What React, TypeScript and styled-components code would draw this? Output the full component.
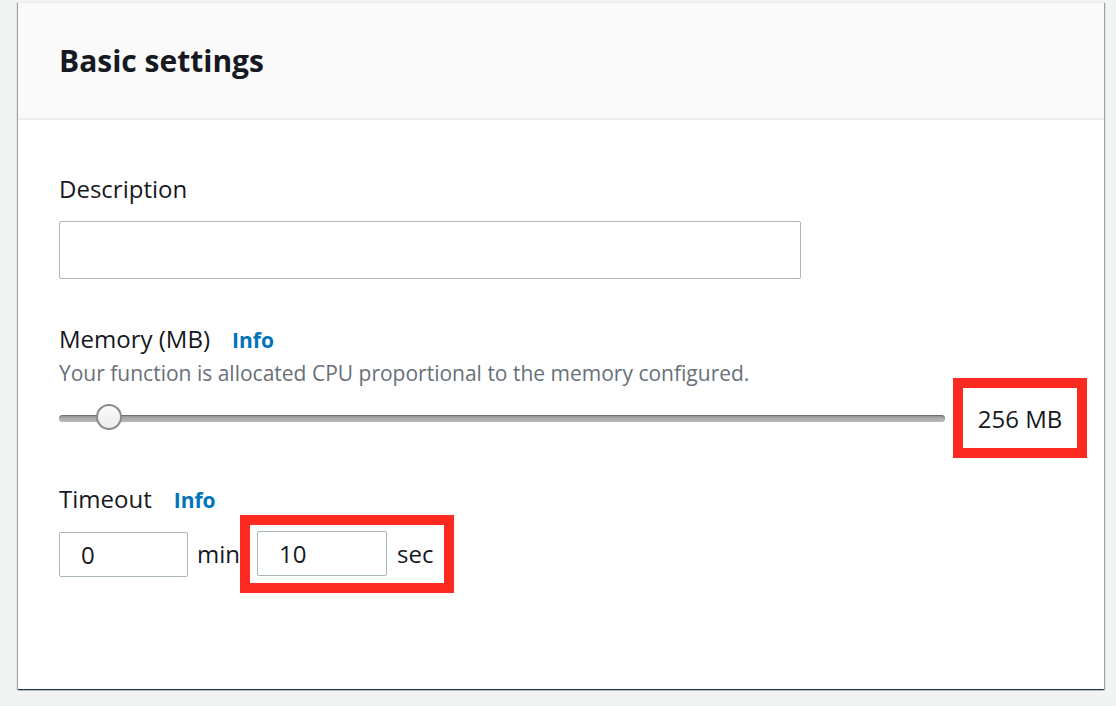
import React from "react";
import styled, { createGlobalStyle } from "styled-components";

const GlobalStyle = createGlobalStyle`
  html, body {
    margin: 0;
    padding: 0;
    background: #f2f3f3;
    font-family: "Open Sans", "Noto Sans", Arial, sans-serif;
    color: #16191f;
  }
  * { box-sizing: border-box; }
`;

const Page = styled.div`
  width: 1116px;
  height: 706px;
  padding: 2px 12px 0 18px;
  overflow: hidden;
`;

const Card = styled.section`
  width: 1086px;
  background: #ffffff;
  box-shadow: 0 1px 1px 0 rgba(0, 28, 36, 0.6),
    0 2px 1px -1px rgba(0, 28, 36, 0.35),
    1px 1px 1px 0 rgba(0, 28, 36, 0.3),
    -1px 1px 1px 0 rgba(0, 28, 36, 0.3);
  border-top: 1px solid #eaeded;
`;

const Header = styled.header`
  background: #fafafa;
  border-bottom: 2px solid #eaeded;
  padding: 40px 41px 39px;
`;

const Title = styled.h2`
  margin: 0;
  font-size: 30px;
  line-height: 36px;
  font-weight: 700;
  letter-spacing: 0;
  color: #16191f;
`;

const Body = styled.div`
  padding: 53px 17px 96px 41px;
  display: flex;
  flex-direction: column;
`;

const Field = styled.div<{ $top?: number }>`
  display: flex;
  flex-direction: column;
  margin-top: ${(p) => p.$top ?? 0}px;
`;

const LabelRow = styled.div`
  display: flex;
  align-items: baseline;
  gap: 22px;
`;

const Label = styled.label`
  font-size: 24px;
  line-height: 32px;
  color: #16191f;
`;

const InfoLink = styled.a`
  font-size: 21px;
  font-weight: 700;
  color: #0073bb;
  text-decoration: none;
`;

const Hint = styled.div`
  font-size: 21px;
  line-height: 28px;
  color: #687078;
  margin-top: 4px;
`;

const TextInput = styled.input<{ $width: number; $height: number }>`
  width: ${(p) => p.$width}px;
  height: ${(p) => p.$height}px;
  border: 1px solid #aab7b8;
  border-radius: 2px;
  background: #fff;
  padding: 0 0 0 21px;
  font-family: inherit;
  font-size: 24px;
  color: #16191f;
  outline: none;
`;

const DescInput = styled(TextInput)`
  margin-top: 16px;
  border-width: 1.5px;
`;

const SliderRow = styled.div`
  display: flex;
  align-items: center;
  margin-top: -9px;
`;

const Track = styled.div`
  position: relative;
  flex: 1;
  height: 7px;
  border-radius: 4px;
  background: linear-gradient(#8d8d8d, #a9a9a9 45%, #b9b9b9);
  box-shadow: inset 0 1px 1px rgba(0, 0, 0, 0.25);
`;

const Thumb = styled.div`
  position: absolute;
  top: 50%;
  width: 26px;
  height: 26px;
  margin-left: -13px;
  margin-top: -14px;
  border-radius: 50%;
  border: 2px solid #8b8b8b;
  background: linear-gradient(#fbfbfb, #ececec);
`;

const Highlight = styled.div`
  border: 10px solid #fc2a20;
  background: #fff;
  display: flex;
  align-items: center;
`;

const ValueBox = styled(Highlight)`
  margin-left: 8px;
  width: 134px;
  height: 80px;
  justify-content: center;
  font-size: 24px;
  color: #16191f;
`;

const TimeRow = styled.div`
  display: flex;
  align-items: center;
  margin-top: 0;
`;

const Unit = styled.span<{ $gap: number }>`
  font-size: 24px;
  line-height: 32px;
  color: #16191f;
  margin-left: ${(p) => p.$gap}px;
`;

const SecBox = styled(Highlight)`
  padding: 6px 11px 7px 7px;
`;

export default function App() {
  const min = 64;
  const max = 10240;
  const value = 256;
  const pct = ((value - min) / (max - min)) * 100 + 3.8;
  return (
    <>
      <GlobalStyle />
      <Page>
        <Card>
          <Header>
            <Title>Basic settings</Title>
          </Header>
          <Body>
            <Field>
              <Label>Description</Label>
              <DescInput $width={742} $height={58} defaultValue="" />
            </Field>

            <Field $top={44}>
              <LabelRow>
                <Label>Memory (MB)</Label>
                <InfoLink>Info</InfoLink>
              </LabelRow>
              <Hint>
                Your function is allocated CPU proportional to the memory configured.
              </Hint>
            </Field>
            <SliderRow>
              <Track>
                <Thumb style={{ left: `${pct}%` }} />
              </Track>
              <ValueBox>256 MB</ValueBox>
            </SliderRow>

            <Field $top={25}>
              <LabelRow>
                <Label>Timeout</Label>
                <InfoLink>Info</InfoLink>
              </LabelRow>
            </Field>
            <TimeRow>
              <TextInput $width={129} $height={45} defaultValue="0" />
              <Unit $gap={9}>min</Unit>
              <SecBox>
                <TextInput $width={130} $height={45} defaultValue="10" />
                <Unit $gap={10}>sec</Unit>
              </SecBox>
            </TimeRow>
          </Body>
        </Card>
      </Page>
    </>
  );
}
